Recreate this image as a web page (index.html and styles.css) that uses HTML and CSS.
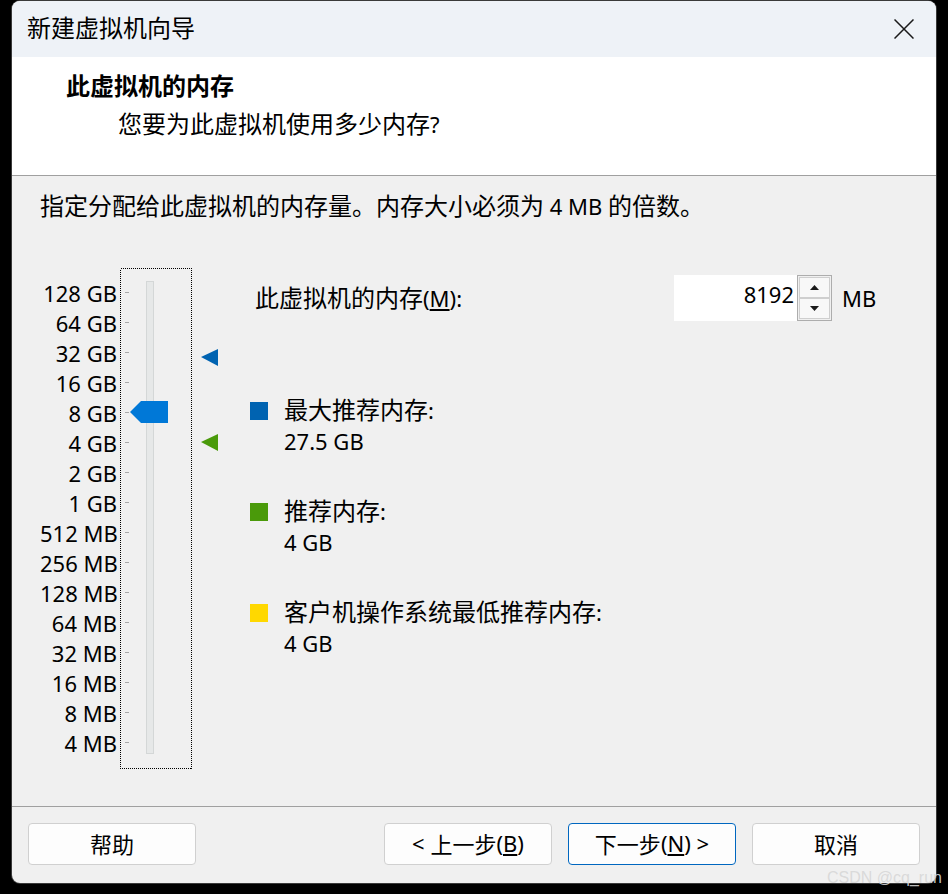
FILE: index.html
```html
<!DOCTYPE html>
<html lang="zh-CN">
<head>
<meta charset="utf-8">
<title>新建虚拟机向导</title>
<link rel="stylesheet" href="styles.css">
</head>
<body>
<div class="window">
  <div class="titlebar">
    <span class="title">新建虚拟机向导</span>
    <svg class="close" width="20" height="20" viewBox="0 0 20 20"><path d="M0.5 0.5 L19.5 19.5 M19.5 0.5 L0.5 19.5" stroke="#1a1a1a" stroke-width="1.5" fill="none"/></svg>
  </div>
  <div class="header">
    <div class="h-title">此虚拟机的内存</div>
    <div class="h-sub">您要为此虚拟机使用多少内存<span class="l">?</span></div>
  </div>
  <div class="main">
    <p class="intro">指定分配给此虚拟机的内存量。内存大小必须为<span class="l"> 4 MB </span>的倍数。</p>
    <div class="content">
      <div class="scale">
        <div>128 GB</div><div>64 GB</div><div>32 GB</div><div>16 GB</div>
        <div>8 GB</div><div>4 GB</div><div>2 GB</div><div>1 GB</div>
        <div>512 MB</div><div>256 MB</div><div>128 MB</div><div>64 MB</div>
        <div>32 MB</div><div>16 MB</div><div>8 MB</div><div>4 MB</div>
      </div>
      <svg class="slider" width="100" height="501" viewBox="0 0 100 501">
        <rect x="0.5" y="0.5" width="71" height="500" fill="none" stroke="#000" stroke-width="1" stroke-dasharray="1 1" shape-rendering="crispEdges"/>
        <rect x="26.5" y="13.5" width="7" height="472" fill="#e6e8e8" stroke="#d4d7d7" shape-rendering="crispEdges"/>
        <g fill="#a8a8a8" shape-rendering="crispEdges">
          <rect x="5" y="24" width="4" height="1"/><rect x="5" y="54" width="4" height="1"/>
          <rect x="5" y="84" width="4" height="1"/><rect x="5" y="114" width="4" height="1"/>
          <rect x="5" y="144" width="4" height="1"/><rect x="5" y="174" width="4" height="1"/>
          <rect x="5" y="204" width="4" height="1"/><rect x="5" y="234" width="4" height="1"/>
          <rect x="5" y="264" width="4" height="1"/><rect x="5" y="294" width="4" height="1"/>
          <rect x="5" y="324" width="4" height="1"/><rect x="5" y="354" width="4" height="1"/>
          <rect x="5" y="384" width="4" height="1"/><rect x="5" y="414" width="4" height="1"/>
          <rect x="5" y="444" width="4" height="1"/><rect x="5" y="474" width="4" height="1"/>
        </g>
        <polygon points="10,144 21,133 48,133 48,155 21,155" fill="#0078d7"/>
        <polygon points="81,89 98,81 98,98" fill="#0063b1"/>
        <polygon points="81,174 98,166 98,183" fill="#4a9a0a"/>
      </svg>
      <div class="right">
        <div class="mem-row">
          <span class="mem-label">此虚拟机的内存<span class="l">(<u>M</u>):</span></span>
          <div class="spin">
            <div class="spin-input"><span class="l">8192</span></div>
            <div class="spin-btns">
              <div class="sb"><svg width="9" height="5" viewBox="0 0 9 5"><polygon points="0,5 4.5,0 9,5" fill="#1a1a1a"/></svg></div>
              <div class="sb"><svg width="9" height="5" viewBox="0 0 9 5"><polygon points="0,0 9,0 4.5,5" fill="#1a1a1a"/></svg></div>
            </div>
          </div>
          <span class="l unit">MB</span>
        </div>
        <div class="legend">
          <div class="item">
            <span class="sw blue"></span>
            <div><div class="zh">最大推荐内存<span class="l">:</span></div><div class="l val">27.5 GB</div></div>
          </div>
          <div class="item">
            <span class="sw green"></span>
            <div><div class="zh">推荐内存<span class="l">:</span></div><div class="l val">4 GB</div></div>
          </div>
          <div class="item">
            <span class="sw yellow"></span>
            <div><div class="zh">客户机操作系统最低推荐内存<span class="l">:</span></div><div class="l val">4 GB</div></div>
          </div>
        </div>
      </div>
    </div>
  </div>
  <div class="footer">
    <div class="btn">帮助</div>
    <div class="btn-group">
      <div class="btn"><span class="l">&lt;&nbsp;</span>上一步<span class="l">(<u>B</u>)</span></div>
      <div class="btn primary">下一步<span class="l">(<u>N</u>) &gt;</span></div>
      <div class="btn">取消</div>
    </div>
  </div>
</div>
<div class="watermark">CSDN @cq_run</div>
</body>
</html>
```
FILE: styles.css
```css
* { box-sizing: border-box; }

html, body {
  margin: 0;
  background: #000;
}

body {
  width: 948px;
  height: 894px;
  position: relative;
  overflow: hidden;
  padding-top: 1px;
  font-family: "Noto Sans CJK SC", sans-serif;
  color: #000;
}

.l {
  font-family: "Noto Sans", "Noto Sans CJK SC", sans-serif;
  font-size: 22px;
  line-height: 20px;
}

.window {
  margin-left: 12px;
  width: 924px;
  height: 882px;
  border-radius: 8px;
  overflow: hidden;
  background: #f0f0f0;
  box-shadow: 0 0 0 1px #3a3a3a;
  display: flex;
  flex-direction: column;
}

.titlebar {
  height: 56px;
  flex: none;
  background: #eef2f7;
  display: flex;
  align-items: center;
  justify-content: space-between;
  padding: 0 22px 0 15px;
  font-size: 24px;
  line-height: 30px;
}

.title { margin-bottom: 4px; }

.close { display: block; }

.header {
  height: 119px;
  flex: none;
  background: #fff;
  border-bottom: 1px solid #a0a0a0;
  padding: 13px 0 0 54px;
}

.h-title {
  font-size: 24px;
  font-weight: 700;
  line-height: 30px;
  height: 30px;
}

.h-sub {
  font-size: 24px;
  line-height: 30px;
  height: 30px;
  margin: 8px 0 0 52px;
}

.main {
  flex: 1;
  padding: 14px 0 0 28px;
}

.intro {
  margin: 0;
  font-size: 24px;
  line-height: 30px;
  height: 30px;
  white-space: nowrap;
}

.content {
  display: flex;
  align-items: flex-start;
  margin-top: 48px;
}

.scale {
  width: 77px;
  flex: none;
  padding-top: 10px;
  text-align: right;
  font-family: "Noto Sans", sans-serif;
  font-size: 22px;
  line-height: 30px;
  white-space: nowrap;
}

.slider {
  display: block;
  flex: none;
  margin-left: 3px;
}

.right {
  margin-left: 30px;
  padding-top: 7px;
}

.mem-row {
  display: grid;
  grid-template-columns: 424px 158px auto;
  align-items: center;
  height: 46px;
  font-size: 24px;
  line-height: 30px;
}

.mem-label {
  padding-left: 5px;
  padding-bottom: 2px;
  white-space: nowrap;
}

.spin {
  display: flex;
  height: 46px;
}

.spin-input {
  width: 123px;
  height: 46px;
  background: #fff;
  text-align: right;
  padding: 8px 3px 0 0;
  line-height: 20px;
}

.spin-btns {
  width: 35px;
  height: 46px;
  border: 1px solid #adadad;
  background: #f0f0f0;
  display: flex;
  flex-direction: column;
  justify-content: space-between;
  padding: 1px;
}

.sb {
  height: 21px;
  border: 1px solid #cfcfcf;
  background: #f8f8f8;
  display: flex;
  align-items: center;
  justify-content: center;
}

.sb svg { display: block; }

.unit {
  margin-left: 10px;
}

.legend {
  margin-top: 74px;
  display: flex;
  flex-direction: column;
  gap: 39px;
  font-size: 24px;
}

.item {
  display: grid;
  grid-template-columns: 18px auto;
  column-gap: 16px;
  align-items: start;
}

.zh {
  height: 31px;
  line-height: 31px;
  margin-top: -2px;
  margin-bottom: 2px;
}

.val {
  display: block;
  height: 31px;
  line-height: 31px;
}

.sw {
  width: 18px;
  height: 18px;
  margin-top: 7px;
}

.sw.blue { background: #0063b1; }
.sw.green { background: #4a9a0a; }
.sw.yellow { background: #ffd800; }

.footer {
  height: 77px;
  flex: none;
  border-top: 1px solid #a0a0a0;
  padding: 16px;
  display: flex;
  align-items: flex-start;
}

.btn-group {
  margin-left: auto;
  display: flex;
  gap: 16px;
}

.btn {
  width: 168px;
  height: 42px;
  background: #fdfdfd;
  border: 1px solid #d0d0d0;
  border-radius: 4px;
  display: flex;
  align-items: center;
  justify-content: center;
  font-size: 22px;
  line-height: 30px;
  padding-bottom: 2px;
  white-space: nowrap;
}

.btn.primary {
  border-color: #0067c0;
}

.watermark {
  position: absolute;
  left: 827px;
  top: 868px;
  font-family: "Liberation Sans", sans-serif;
  font-size: 16px;
  line-height: 20px;
  color: rgba(215, 215, 215, 0.9);
  white-space: nowrap;
}
```
